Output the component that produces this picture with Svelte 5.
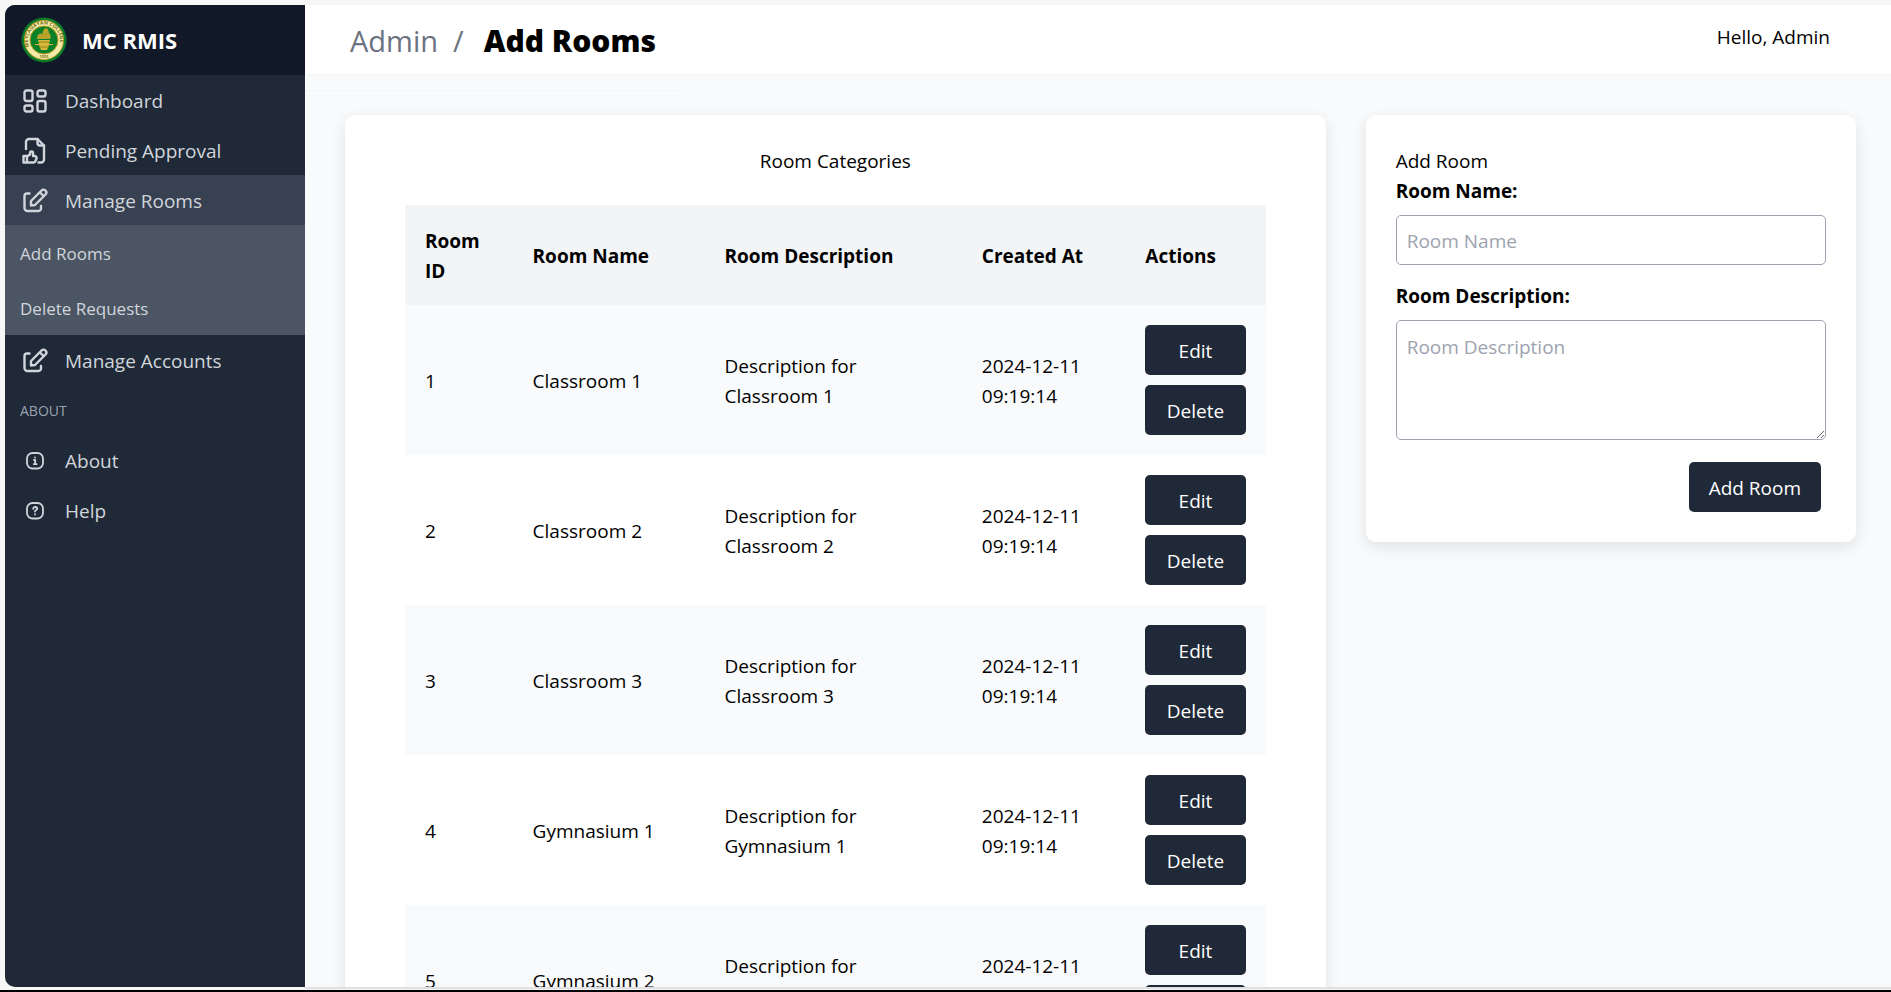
<script>
  const rooms = ['Classroom 1', 'Classroom 2', 'Classroom 3', 'Gymnasium 1', 'Gymnasium 2'];
  const seal = 'MEYCAUAYAN COLLEGE';
</script>

{#snippet edit()}
  <svg class="icon" viewBox="0 0 30 30" aria-hidden="true">
    <path d="M9.500 7.500H7A2.500 2.500 0 0 0 4.500 10v12a3 3 0 0 0 3 3H18.500a2.500 2.500 0 0 0 2.500-2.500V20" />
    <path d="M11 15 21.500 4.500a2.700 2.700 0 0 1 4 4L15 19 11 19.500z" />
    <path d="M20 6.500 23.500 10" />
  </svg>
{/snippet}

<div class="window">
  <nav class="sidebar">
    <div class="brand">
      <svg class="logo" viewBox="0 0 46 46" aria-hidden="true">
        <defs><path id="ring" d="M11 34A16 16 0 1 1 35 34" /></defs>
        <circle cx="23" cy="23" r="22.500" fill="#0b7a2c" />
        <circle cx="23" cy="23" r="19.500" fill="#f3eba9" stroke="#c9a92c" stroke-width="1" />
        <circle cx="23" cy="23" r="14" fill="#0a8028" stroke="#b99a25" stroke-width="1" />
        <text class="seal"><textPath href="#ring" startOffset="5">{seal}</textPath></text>
        <text class="seal year" x="23" y="41" text-anchor="middle">1925</text>
        <path d="M16 22c0-4 2-5 4-6l1 2 1-4 2-3 3 1 1 4c2 2 2 4 1 6z" fill="#b9a32a" />
        <path d="M17 23h12l-1 4h4v1h-4l-2 5h-6l-2-5h-4v-1h4z" fill="#d8b73a" />
        <path d="M18 25h10M18 30h10" stroke="#8f861f" stroke-width="1" />
      </svg>
      <span>MC RMIS</span>
    </div>
    <a href="#dashboard" class="item">
      <svg class="icon" viewBox="0 0 30 30" aria-hidden="true">
        <rect x="4.500" y="4.500" width="8" height="10.500" rx="2" />
        <rect x="17.500" y="4.500" width="8" height="6" rx="2" />
        <rect x="4.500" y="19.500" width="8" height="6" rx="2" />
        <rect x="17.500" y="15" width="8" height="10.500" rx="2" />
      </svg>
      Dashboard
    </a>
    <a href="#pending" class="item">
      <svg class="icon" viewBox="0 0 30 30" aria-hidden="true">
        <path d="M6 13V6a3 3 0 0 1 3-3h8.500l6.500 6.500V23.500a3 3 0 0 1-3 3h-2.500" />
        <path d="M17.500 3v4a2.500 2.500 0 0 0 2.500 2.500h4" />
        <path d="M3.500 20H7v6.500H3.500zM7 20.500l3-2V17a1.500 1.500 0 0 1 3 0v3h1.500a2 2 0 0 1 2 2.500l-1 2.500a2 2 0 0 1-2 1.500H7" />
      </svg>
      Pending Approval
    </a>
    <a href="#rooms" class="item active">{@render edit()}Manage Rooms</a>
    <div class="sub">
      <a href="#add">Add Rooms</a>
      <a href="#delete">Delete Requests</a>
    </div>
    <a href="#accounts" class="item">{@render edit()}Manage Accounts</a>
    <div class="group">ABOUT</div>
    <a href="#about" class="item">
      <svg class="icon thin" viewBox="0 0 30 30" aria-hidden="true">
        <rect x="7" y="7" width="16" height="15.500" rx="5.500" />
        <path d="M14 14h1.200v4M13.800 18.200h2.800M15 11.300v.2" />
      </svg>
      About
    </a>
    <a href="#help" class="item">
      <svg class="icon thin" viewBox="0 0 30 30" aria-hidden="true">
        <rect x="7" y="7" width="16" height="15.500" rx="5.500" />
        <path d="M13.200 12.800c0-2.600 4-2.200 4 0 0 1.300-2.200 1.300-2.200 2.700M15 18.200v.2" />
      </svg>
      Help
    </a>
  </nav>

  <div class="page">
    <header>
      <div class="crumbs"><span>Admin</span><span class="slash">/</span><h1>Add Rooms</h1></div>
      <span class="hello">Hello, Admin</span>
    </header>
    <div class="rule"></div>
    <main>
      <section class="card list">
        <h2>Room Categories</h2>
        <table>
          <colgroup><col class="c1" /><col class="c2" /><col class="c3" /><col class="c4" /><col class="c5" /></colgroup>
          <thead>
            <tr><th>Room ID</th><th>Room Name</th><th>Room Description</th><th>Created At</th><th>Actions</th></tr>
          </thead>
          <tbody>
            {#each rooms as room, i}
              <tr>
                <td>{i + 1}</td>
                <td>{room}</td>
                <td>Description for<br />{room}</td>
                <td>2024-12-11 09:19:14</td>
                <td><div class="actions"><button type="button">Edit</button><button type="button">Delete</button></div></td>
              </tr>
            {/each}
          </tbody>
        </table>
      </section>
      <section class="card">
        <h2>Add Room</h2>
        <form>
          <label for="name">Room Name:</label>
          <input id="name" type="text" placeholder="Room Name" />
          <label for="desc">Room Description:</label>
          <textarea id="desc" placeholder="Room Description"></textarea>
          <button type="button">Add Room</button>
        </form>
      </section>
    </main>
  </div>
</div>

<style>
  :global(body) {
    margin: 0;
    background: #f7f7f7;
    color: #000;
    font: 19px/30px "Open Sans", "Noto Sans", sans-serif;
  }
  * { box-sizing: border-box; }
  .window {
    display: flex;
    height: 100vh;
    padding: 5px 0 3px 5px;
    overflow: hidden;
    border-bottom: 2px solid #000;
  }
  .sidebar {
    flex: 0 0 300px;
    overflow: hidden;
    background: #1f2937;
    border-radius: 10px 0 0 10px;
    color: #d1d5db;
  }
  .brand {
    display: flex;
    align-items: center;
    gap: 15px;
    height: 70px;
    padding: 0 16px;
    background: #111827;
    color: #fff;
    font-size: 22px;
    font-weight: 700;
  }
  .logo { width: 46px; height: 46px; }
  .seal { font: 700 5px "Open Sans", sans-serif; fill: #75701c; }
  .year { font-size: 4px; }
  a { color: inherit; text-decoration: none; }
  .item {
    display: flex;
    align-items: center;
    gap: 15px;
    height: 50px;
    padding: 1px 15px 0;
  }
  .active { background: #374151; }
  .icon {
    width: 30px;
    height: 30px;
    fill: none;
    stroke: currentColor;
    stroke-width: 2.400;
    stroke-linecap: round;
    stroke-linejoin: round;
  }
  .thin { stroke-width: 1.800; }
  .sub { background: #4b5563; font-size: 17px; }
  .sub a { display: block; padding: 14px 15px 11px; }
  .group { padding: 11px 15px 9px; font-size: 14px; color: #9ca3af; }
  .page {
    flex: 1;
    min-width: 0;
    overflow: hidden;
    background: #f9fafb;
    box-shadow: 0 2px #e0e0e2;
  }
  header {
    display: flex;
    justify-content: space-between;
    height: 70px;
    padding: 2px 61px 0 45px;
    background: #fff;
    border-bottom: 1px solid #f3f4f6;
  }
  .crumbs { display: flex; align-items: center; font-size: 29px; color: #6b7280; }
  .slash { margin: 0 20px 0 15px; }
  h1 { margin: 0; color: #000; font-size: 30px; font-weight: 800; }
  .hello { padding-top: 15px; }
  .rule { width: 380px; height: 16px; border-bottom: 1px solid #f3f4f6; }
  main {
    display: grid;
    grid-template-columns: 2fr 1fr;
    align-items: start;
    gap: 40px;
    padding: 24px 35px 40px 40px;
  }
  .card {
    padding: 31px 30px 30px;
    background: #fff;
    border-radius: 10px;
    box-shadow: 0 5px 15px rgb(0 0 0 / 10%);
  }
  .list { padding: 31px 60px 30px; }
  h2 { margin: 0; font-size: 19px; font-weight: 400; }
  .list h2 { margin-bottom: 29px; text-align: center; }
  table { width: 100%; table-layout: fixed; border-collapse: collapse; }
  .c1 { width: 12.500%; }
  .c2 { width: 22.300%; }
  .c3 { width: 29.900%; }
  .c4 { width: 19%; }
  .c5 { width: 16.300%; }
  th, td { padding: 21px 20px 19px; text-align: left; }
  td:last-child { padding: 20px; }
  th { background: #f3f4f6; font-weight: 700; }
  tbody tr:nth-child(odd) { background: #f9fafb; }
  .actions { display: grid; gap: 10px; }
  button {
    height: 50px;
    padding: 2px 20px 0;
    border: 0;
    border-radius: 5px;
    background: #1f2937;
    color: #fff;
    font: inherit;
  }
  .actions button { padding: 2px 0 0; }
  form { display: flex; flex-direction: column; }
  label { font-weight: 700; }
  input, textarea {
    margin: 9px 0 16px;
    padding: 11px 10px 9px;
    border: 1px solid #9ca3af;
    border-radius: 5px;
    background: #fff;
    font: inherit;
  }
  input { height: 50px; }
  textarea { height: 120px; margin-bottom: 22px; resize: vertical; }
  ::placeholder { color: #9ca3af; opacity: 1; }
  form button { align-self: flex-end; margin-right: 5px; }
</style>
